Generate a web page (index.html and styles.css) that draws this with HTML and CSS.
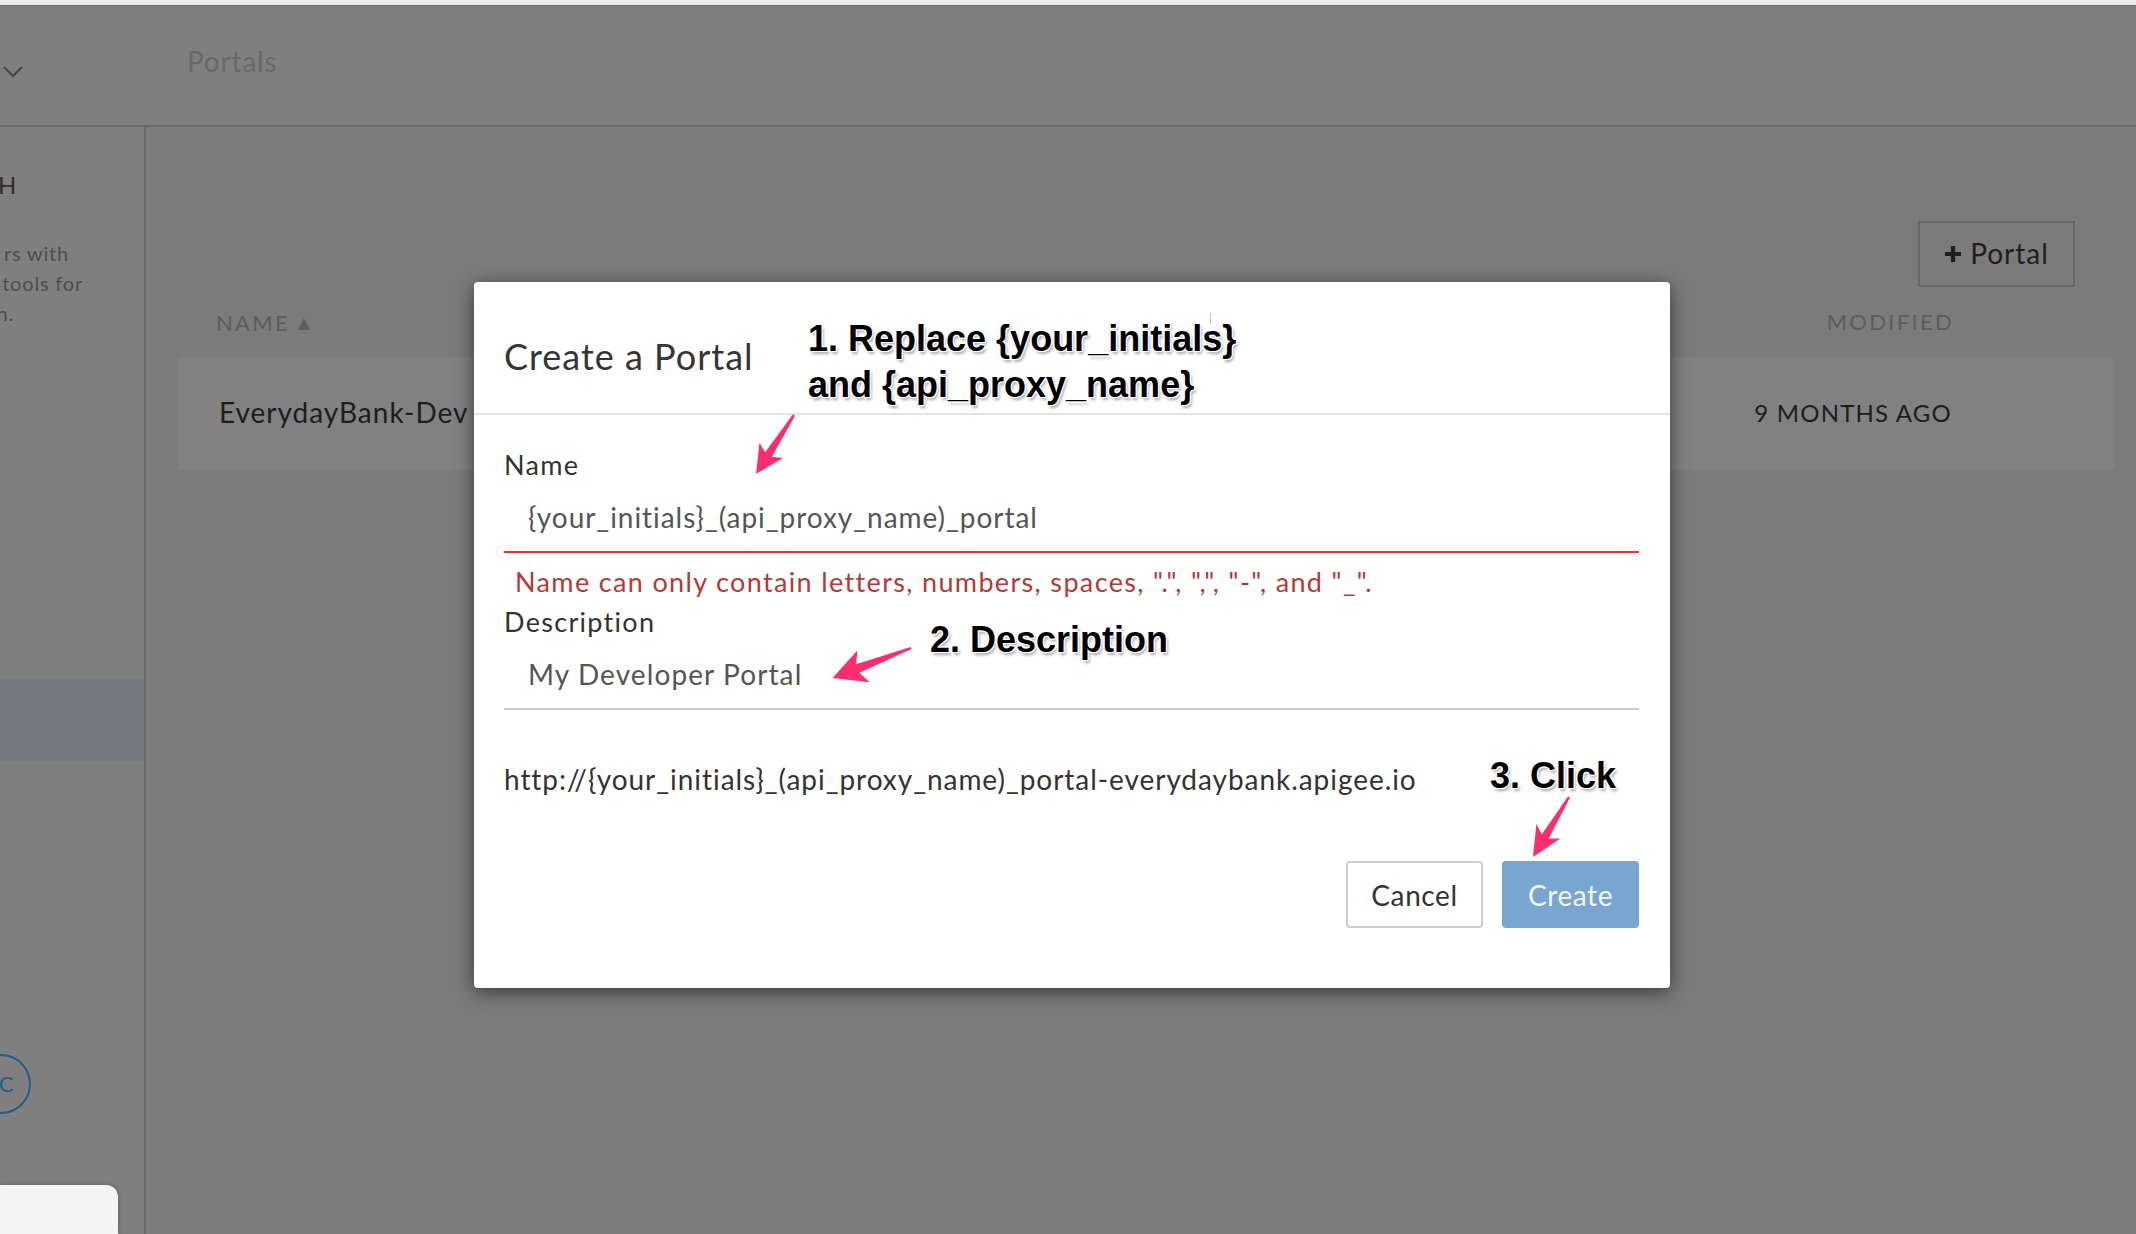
FILE: index.html
```html
<!DOCTYPE html>
<html>
<head>
<meta charset="utf-8">
<title>Portals</title>
<link rel="stylesheet" href="styles.css">
</head>
<body>
<div class="chrome"></div>
<div class="app">
  <header class="topbar">
    <div class="brand">
      <svg class="chev" width="22" height="14" viewBox="0 0 22 14"><polyline points="2,2 11,11 20,2" fill="none" stroke="#474747" stroke-width="2.2"/></svg>
    </div>
    <div class="crumb">Portals</div>
  </header>
  <div class="layout">
    <aside class="sidebar">
      <div class="sb-title">H</div>
      <div class="sb-desc">
        <div class="sb-line l1">rs with</div>
        <div class="sb-line l2">tools for</div>
        <div class="sb-line l3">n.</div>
      </div>
      <div class="sb-active"></div>
      <div class="avatar">C</div>
    </aside>
    <main class="main">
      <div class="toolbar">
        <button class="btn-add"><svg class="plus" width="18" height="18" viewBox="0 0 18 18"><path d="M9 1v16M1 9h16" stroke="#1d1d1d" stroke-width="4.2"/></svg>Portal</button>
      </div>
      <div class="table">
        <div class="thead">
          <div class="th">NAME <span class="sort">&#9650;</span></div>
          <div class="th">MODIFIED</div>
        </div>
        <div class="trow">
          <div class="td name">EverydayBank-Dev</div>
          <div class="td mod">9 MONTHS AGO</div>
        </div>
      </div>
    </main>
  </div>
</div>

<div class="dock"></div>

<div class="modal">
  <div class="modal-head">
    <h3 class="modal-title">Create a Portal</h3>
  </div>
  <div class="modal-body">
    <div class="label">Name</div>
    <div class="field invalid">{your_initials}_(api_proxy_name)_portal</div>
    <div class="error">Name can only contain letters, numbers, spaces, ".", ",", "-", and "_".</div>
    <div class="label">Description</div>
    <div class="field desc">My Developer Portal</div>
    <div class="url">http://{your_initials}_(api_proxy_name)_portal-everydaybank.apigee.io</div>
    <div class="actions">
      <button class="btn btn-cancel">Cancel</button>
      <button class="btn btn-create">Create</button>
    </div>
  </div>
</div>

<svg class="arrows" width="2136" height="1234" viewBox="0 0 2136 1234">
  <g transform="translate(794,415) rotate(122.8)">
    <polygon points="0,-1.2 47,-4 42,-14 70,0 42,14 47,4 0,1.2" fill="#fe2d6f"/>
  </g>
  <g transform="translate(911,648) rotate(159)">
    <polygon points="0,-1.2 57,-4.5 51,-17 84,0 51,17 57,4.5 0,1.2" fill="#fe2d6f"/>
  </g>
  <g transform="translate(1569,797) rotate(121)">
    <polygon points="0,-1.2 46,-4 40,-14 70,0 40,14 46,4 0,1.2" fill="#fe2d6f"/>
  </g>
  <line x1="1210.5" y1="313" x2="1210.5" y2="324" stroke="#c4c4c4" stroke-width="1"/>
</svg>

<div class="note n1">1. Replace {your_initials}<br>and {api_proxy_name}</div>
<div class="note n2">2. Description</div>
<div class="note n3">3. Click</div>
</body>
</html>
```

FILE: styles.css
```css
* { box-sizing: border-box; }
html, body { margin: 0; padding: 0; }
body {
  width: 2136px;
  height: 1234px;
  overflow: hidden;
  background: #7b7b7b;
  font-family: "Lato", "Open Sans", sans-serif;
  color: #333;
  position: relative;
}

.chrome {
  height: 6px;
  background: #ebebeb;
  border-bottom: 1px solid #6f6f6f;
}

.app {
  display: flex;
  flex-direction: column;
  height: 1228px;
}

.topbar {
  height: 121px;
  flex: none;
  display: flex;
  background: #7f7f7f;
  border-bottom: 2px solid #6b6b6b;
}
.brand {
  width: 187px;
  padding: 59px 0 0 2px;
}
.chev { display: block; }
.crumb {
  font-size: 28px;
  line-height: 34px;
  color: #696969;
  letter-spacing: 0.8px;
  padding-top: 38px;
}

.layout {
  flex: 1;
  display: flex;
}

.sidebar {
  width: 146px;
  flex: none;
  background: #7f7f7f;
  border-right: 2px solid #6b6b6b;
  overflow: hidden;
  display: flex;
  flex-direction: column;
}
.sb-title {
  margin-top: 38px;
  margin-left: -2px;
  font-size: 24px;
  line-height: 40px;
  color: #2c2c2c;
}
.sb-desc {
  margin-top: 33px;
  font-size: 20px;
  line-height: 30px;
  color: #4e4e4e;
}
.sb-line {
  display: flex;
  justify-content: flex-end;
  white-space: nowrap;
  letter-spacing: 0.8px;
}
.sb-line.l1 { width: 69px; }
.sb-line.l2 { width: 83px; }
.sb-line.l3 { width: 14px; }
.sb-active {
  margin-top: 351px;
  height: 82px;
  background: #737a81;
}
.avatar {
  margin-top: 293px;
  margin-left: -29px;
  width: 60px;
  height: 60px;
  border-radius: 50%;
  border: 2px solid #1f5f8b;
  color: #1f5f8b;
  font-size: 22px;
  line-height: 56px;
  text-align: center;
  padding-left: 10px;
}

.main {
  flex: 1;
  display: flex;
  flex-direction: column;
}
.toolbar {
  display: flex;
  justify-content: flex-end;
  padding: 94px 61px 0 0;
}
.btn-add {
  width: 157px;
  height: 66px;
  background: transparent;
  border: 2px solid #686868;
  font-family: inherit;
  font-size: 28px;
  letter-spacing: 1px;
  color: #1e1e1e;
  display: flex;
  align-items: center;
  justify-content: center;
  gap: 8px;
  padding: 0 0 3px 0;
}
.plus { display: block; margin-top: 3px; }

.table {
  margin: 15px 22px 0 32px;
}
.thead {
  display: flex;
  justify-content: space-between;
  height: 40px;
  line-height: 40px;
  padding: 0 160px 0 38px;
  font-size: 22px;
  letter-spacing: 2.3px;
  color: #5d5d5d;
}
.sort { font-size: 20px; vertical-align: 1px; letter-spacing: 0; margin-left: -4px; }
.trow {
  margin-top: 16px;
  height: 112px;
  background: #818181;
  border-radius: 3px;
  display: flex;
  justify-content: space-between;
  align-items: center;
  padding: 0 162px 4px 41px;
}
.td.name { font-size: 28px; color: #1d1d1d; letter-spacing: 1px; }
.td.mod { font-size: 24px; color: #1d1d1d; letter-spacing: 1.2px; }

.dock {
  position: absolute;
  left: 0;
  bottom: 0;
  width: 118px;
  height: 49px;
  background: #f4f4f4;
  border-top-right-radius: 12px;
  box-shadow: 0 0 6px rgba(0,0,0,0.25);
}

/* modal */
.modal {
  position: absolute;
  left: 474px;
  top: 282px;
  width: 1196px;
  height: 706px;
  background: #fff;
  border-radius: 4px;
  box-shadow: 0 4px 18px rgba(0,0,0,0.55);
}
.modal-head {
  height: 133px;
  border-bottom: 2px solid #e3e3e3;
  padding: 0 30px;
}
.modal-title {
  margin: 0;
  padding-top: 54px;
  font-size: 36px;
  line-height: 40px;
  font-weight: 400;
  letter-spacing: 1px;
  color: #353535;
}
.modal-body {
  padding: 32px 31px 0 30px;
}
.label {
  font-size: 27px;
  line-height: 36px;
  letter-spacing: 1.3px;
  color: #333;
}
.field {
  height: 70px;
  line-height: 68px;
  padding-left: 24px;
  font-size: 28px;
  letter-spacing: 0.95px;
  color: #555;
  border-bottom: 2px solid #cccccc;
}
.field.desc { letter-spacing: 1.1px; }
.field.invalid {
  border-bottom-color: #e8332b;
  margin-bottom: 11px;
}
.error {
  font-size: 27px;
  line-height: 36px;
  letter-spacing: 1.35px;
  color: #b23b38;
  padding-left: 11px;
  margin-bottom: 4px;
}
.url {
  margin-top: 51px;
  font-size: 28px;
  line-height: 36px;
  letter-spacing: 0.95px;
  color: #333;
}
.actions {
  margin-top: 64px;
  display: flex;
  justify-content: flex-end;
  gap: 19px;
}
.btn {
  width: 137px;
  height: 67px;
  border-radius: 4px;
  font-family: inherit;
  font-size: 28px;
  letter-spacing: 0.6px;
  padding: 0;
}
.btn-cancel {
  background: #fff;
  border: 2px solid #cdcdcd;
  color: #333;
}
.btn-create {
  background: #79a6d1;
  border: 2px solid #79a6d1;
  color: #f3f7fb;
}

/* annotations */
.arrows {
  position: absolute;
  left: 0;
  top: 0;
  pointer-events: none;
}
.note {
  position: absolute;
  font-family: "Liberation Sans", Arial, sans-serif;
  font-weight: 700;
  font-size: 36px;
  line-height: 46px;
  color: #000;
  white-space: nowrap;
  text-shadow: -1px -1px 0 #fff, 1px -1px 0 #fff, -1px 1px 0 #fff, 1px 1px 0 #fff,
               0 0 3px #fff, 2px 3px 3px rgba(0,0,0,0.35);
}
.n1 { left: 808px; top: 316px; }
.n2 { left: 930px; top: 617px; }
.n3 { left: 1490px; top: 753px; }
```
